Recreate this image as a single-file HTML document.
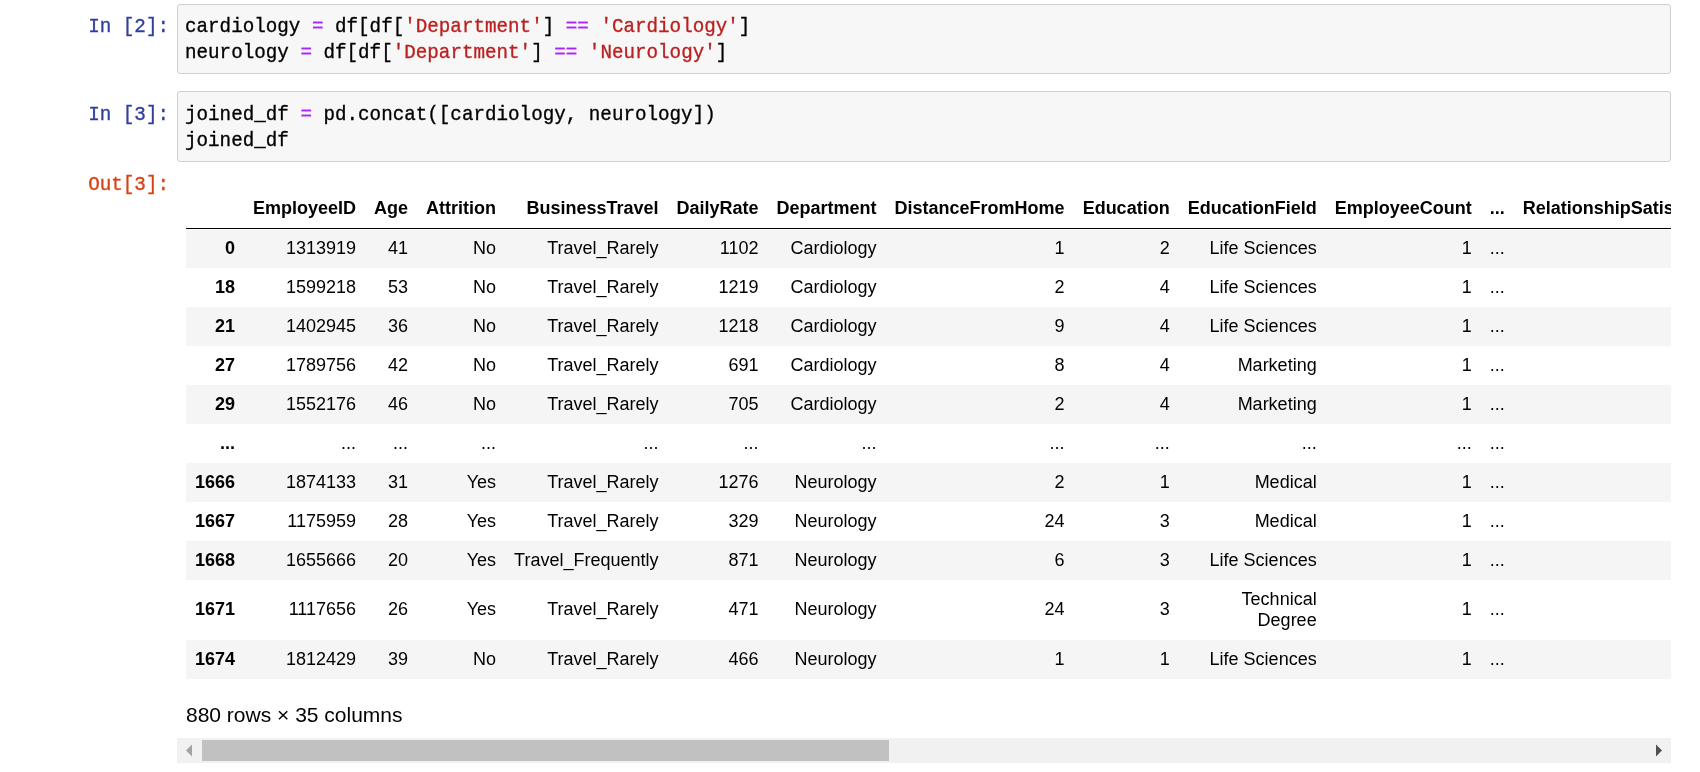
<!DOCTYPE html>
<html><head><meta charset="utf-8">
<style>
html,body{margin:0;padding:0;background:#fff;width:1700px;height:772px;overflow:hidden;position:relative}
.prompt{position:absolute;font-family:"Liberation Mono",monospace;font-size:21px;line-height:25.5px;text-align:right;white-space:pre;width:169px;left:0;transform:scaleX(0.91667);transform-origin:right top}
.pin{color:#303F9F}
.pout{color:#D84315}
.ia{position:absolute;left:177px;width:1492px;background:#f7f7f7;border:1px solid #cfcfcf;border-radius:3px}
.code{position:absolute;left:185px;font-family:"Liberation Mono",monospace;font-size:21px;line-height:25.5px;white-space:pre;color:#000;transform:scaleX(0.9155);transform-origin:left top}
.o{color:#AA22FF}
.s{color:#BA2121}
.clip{position:absolute;left:177px;top:189px;width:1494px;height:520px;overflow:hidden}
table{position:absolute;left:9px;top:0;border-collapse:collapse;border-spacing:0;border:none;color:#000;font-family:"Liberation Sans",sans-serif;font-size:18px;width:max-content}
thead{border-bottom:1.5px solid #000;vertical-align:bottom}
th,td{text-align:right;vertical-align:middle;padding:9px;line-height:normal;white-space:normal;border:none}
th{font-weight:bold}
tbody tr:nth-child(odd){background:#f5f5f5}
tbody tr:first-child>*{box-shadow:inset 0 1px 0 #fff}
.r2>*:not(.tdg){padding-top:8px;padding-bottom:10px}
.foot{position:absolute;left:186px;top:703px;font-family:"Liberation Sans",sans-serif;font-size:21px;line-height:normal;color:#000}
.sb{position:absolute;left:177px;top:738px;width:1494px;height:25px;background:#f1f1f1}
.thumb{position:absolute;left:25px;top:2px;width:687px;height:21px;background:#c1c1c1}
.wc{will-change:transform}
.code,.prompt{-webkit-text-stroke:0.35px currentColor}
</style></head>
<body><div class="wc" style="position:absolute;left:0;top:0;width:1700px;height:772px">
<div class="prompt pin" style="top:14px">In [2]:</div>
<div class="ia" style="top:4px;height:68px"></div>
<div class="code" style="top:14px">cardiology <span class="o">=</span> df[df[<span class="s">'Department'</span>] <span class="o">==</span> <span class="s">'Cardiology'</span>]</div>
<div class="code" style="top:40px">neurology <span class="o">=</span> df[df[<span class="s">'Department'</span>] <span class="o">==</span> <span class="s">'Neurology'</span>]</div>

<div class="prompt pin" style="top:102px">In [3]:</div>
<div class="ia" style="top:91px;height:69px"></div>
<div class="code" style="top:102px">joined_df <span class="o">=</span> pd.concat([cardiology, neurology])</div>
<div class="code" style="top:127.5px">joined_df</div>

<div class="prompt pout" style="top:172px">Out[3]:</div>

<div class="clip">
<table>
<thead><tr><th></th><th>EmployeeID</th><th>Age</th><th>Attrition</th><th>BusinessTravel</th><th>DailyRate</th><th>Department</th><th>DistanceFromHome</th><th>Education</th><th>EducationField</th><th>EmployeeCount</th><th>...</th><th>RelationshipSatisfaction</th><th>StandardHours</th></tr></thead>
<tbody>
<tr><th>0</th><td>1313919</td><td>41</td><td>No</td><td>Travel_Rarely</td><td>1102</td><td>Cardiology</td><td>1</td><td>2</td><td>Life Sciences</td><td>1</td><td>...</td><td>1</td><td>80</td></tr>
<tr><th>18</th><td>1599218</td><td>53</td><td>No</td><td>Travel_Rarely</td><td>1219</td><td>Cardiology</td><td>2</td><td>4</td><td>Life Sciences</td><td>1</td><td>...</td><td>1</td><td>80</td></tr>
<tr><th>21</th><td>1402945</td><td>36</td><td>No</td><td>Travel_Rarely</td><td>1218</td><td>Cardiology</td><td>9</td><td>4</td><td>Life Sciences</td><td>1</td><td>...</td><td>1</td><td>80</td></tr>
<tr><th>27</th><td>1789756</td><td>42</td><td>No</td><td>Travel_Rarely</td><td>691</td><td>Cardiology</td><td>8</td><td>4</td><td>Marketing</td><td>1</td><td>...</td><td>1</td><td>80</td></tr>
<tr><th>29</th><td>1552176</td><td>46</td><td>No</td><td>Travel_Rarely</td><td>705</td><td>Cardiology</td><td>2</td><td>4</td><td>Marketing</td><td>1</td><td>...</td><td>1</td><td>80</td></tr>
<tr><th>...</th><td>...</td><td>...</td><td>...</td><td>...</td><td>...</td><td>...</td><td>...</td><td>...</td><td>...</td><td>...</td><td>...</td><td>...</td><td>...</td></tr>
<tr><th>1666</th><td>1874133</td><td>31</td><td>Yes</td><td>Travel_Rarely</td><td>1276</td><td>Neurology</td><td>2</td><td>1</td><td>Medical</td><td>1</td><td>...</td><td>1</td><td>80</td></tr>
<tr><th>1667</th><td>1175959</td><td>28</td><td>Yes</td><td>Travel_Rarely</td><td>329</td><td>Neurology</td><td>24</td><td>3</td><td>Medical</td><td>1</td><td>...</td><td>1</td><td>80</td></tr>
<tr><th>1668</th><td>1655666</td><td>20</td><td>Yes</td><td>Travel_Frequently</td><td>871</td><td>Neurology</td><td>6</td><td>3</td><td>Life Sciences</td><td>1</td><td>...</td><td>1</td><td>80</td></tr>
<tr class="r2"><th>1671</th><td>1117656</td><td>26</td><td>Yes</td><td>Travel_Rarely</td><td>471</td><td>Neurology</td><td>24</td><td>3</td><td class="tdg">Technical<br>Degree</td><td>1</td><td>...</td><td>1</td><td>80</td></tr>
<tr><th>1674</th><td>1812429</td><td>39</td><td>No</td><td>Travel_Rarely</td><td>466</td><td>Neurology</td><td>1</td><td>1</td><td>Life Sciences</td><td>1</td><td>...</td><td>1</td><td>80</td></tr>
</tbody>
</table>
</div>

<div class="foot">880 rows × 35 columns</div>

<div class="sb">
<div class="thumb"></div>
<svg style="position:absolute;left:0;top:0" width="1494" height="25"><path d="M9,12.5 L15,6.5 L15,18.5 Z" fill="#a3a3a3"/><path d="M1479,6.5 L1485,12.5 L1479,18.5 Z" fill="#505050"/></svg>
</div>
</div></body></html>
